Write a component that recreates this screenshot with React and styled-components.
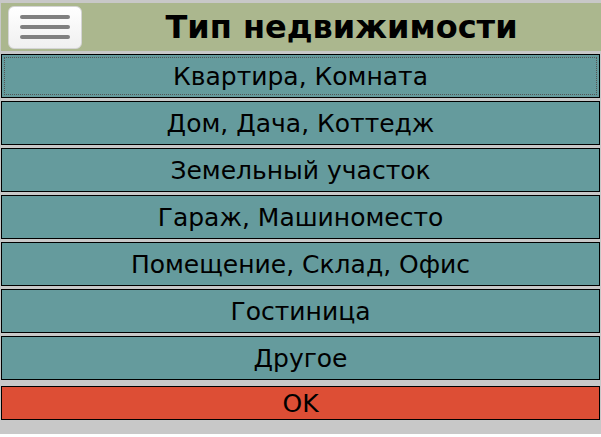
import React, { useState } from 'react'
import styled, { createGlobalStyle } from 'styled-components'

const GlobalStyle = createGlobalStyle`
  html, body {
    margin: 0;
    padding: 0;
    background: #ffffff;
  }
  body {
    font-family: "DejaVu Sans", "Liberation Sans", sans-serif;
  }
`

// Styled-components -------------------------------------------------
const Page = styled.div`
  width: 601px;
  height: 434px;
  background: #c8c8c8;
  padding: 3px 1px 0 1px;
  box-sizing: border-box;
  display: flex;
  flex-direction: column;
`
const Header = styled.header`
  height: 48px;
  background: #abb78e;
  display: flex;
  align-items: center;
  margin: 0 -1px 3px 0;
`
const MenuButton = styled.button`
  width: 74px;
  height: 43px;
  margin-left: 7px;
  flex-shrink: 0;
  border: 1px solid #d4d4d4;
  border-radius: 6px;
  background: linear-gradient(#ffffff, #f0f0f0);
  display: flex;
  flex-direction: column;
  align-items: center;
  justify-content: center;
  gap: 6px;
  padding: 0;
  cursor: pointer;
`
const Bar = styled.span`
  display: block;
  width: 50px;
  height: 4px;
  border-radius: 2px;
  background: #808080;
`
const Title = styled.h1`
  flex: 1;
  margin: 0;
  text-align: center;
  font-size: 32px;
  font-weight: bold;
  color: #000;
`
const List = styled.div`
  display: flex;
  flex-direction: column;
  gap: 3px;
`
const Item = styled.button`
  position: relative;
  height: 44px;
  width: 100%;
  background: ${(p) => (p.$ok ? '#dd4e35' : '#659b9d')};
  border: 1px solid #000;
  font-family: "DejaVu Sans", sans-serif;
  font-size: 25px;
  color: #000;
  padding: 0;
  cursor: pointer;
  outline: none;
  &::after {
    content: '';
    display: ${(p) => (p.$focused ? 'block' : 'none')};
    position: absolute;
    top: 2px;
    left: 2px;
    right: 2px;
    bottom: 2px;
    border: 1px dotted #555;
  }
`
const OkItem = styled(Item)`
  height: 34px;
  margin-top: 6px;
`

const types = [
  'Квартира, Комната',
  'Дом, Дача, Коттедж',
  'Земельный участок',
  'Гараж, Машиноместо',
  'Помещение, Склад, Офис',
  'Гостиница',
  'Другое',
]

// Composant App --------------------------------------------------
export default function App() {
  const [selected, setSelected] = useState(0)

  return (
    <>
      <GlobalStyle />
      <Page>
        <Header>
          <MenuButton aria-label="menu">
            <Bar />
            <Bar />
            <Bar />
          </MenuButton>
          <Title>Тип недвижимости</Title>
        </Header>
        <List>
          {types.map((t, i) => (
            <Item key={t} $focused={selected === i} onClick={() => setSelected(i)}>
              {t}
            </Item>
          ))}
        </List>
        <OkItem $ok>OK</OkItem>
      </Page>
    </>
  )
}
